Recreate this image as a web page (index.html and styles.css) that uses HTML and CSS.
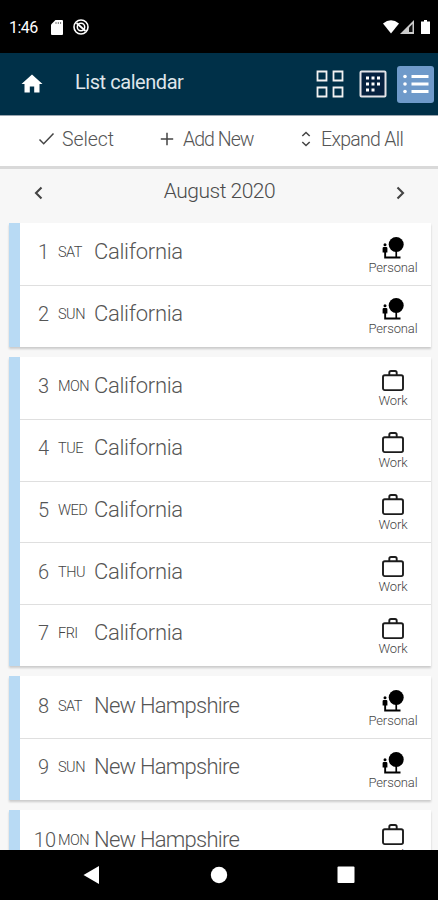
FILE: index.html
```html
<!DOCTYPE html>
<html lang="en">
<head>
<meta charset="utf-8">
<title>List calendar</title>
<link rel="stylesheet" href="styles.css">
</head>
<body>
<svg class="defs" width="0" height="0">
  <symbol id="personal" viewBox="0 0 22 22">
    <circle cx="14.2" cy="8" r="7.5"/>
    <path d="M13.4 14h1.700v6h3.400v1.900H2.200v-6H.6v-4.200q0-1.200 1.200-1.200h2.400q1.200 0 1.200 1.200v4.200h-1.300V20h9.300z"/>
    <circle cx="3" cy="8.200" r="1.500"/>
  </symbol>
  <symbol id="work" viewBox="0 0 22 22">
    <g fill="none" stroke="#1c1c1c" stroke-width="1.900"><rect x="1" y="5.800" width="20" height="14.800" rx="1.800"/><path d="M7.300 6V3.200Q7.300 1.500 9 1.500h4q1.700 0 1.700 1.700V6"/></g>
  </symbol>
</svg>
<div class="screen">
  <div class="status">
    <span class="time">1:46</span>
    <svg class="sd" width="12" height="15" viewBox="0 0 12 15"><path fill="#fff" d="M4.500 0H11q1 0 1 1v13q0 1-1 1H1q-1 0-1-1V4.500z"/><path stroke="#777" d="M5 2v2M7.300 2v2M9.600 2v2"/></svg>
    <svg class="sync" width="16" height="16" viewBox="0 0 16 16" fill="none" stroke="#fff"><circle cx="8" cy="8" r="7" stroke-width="1.600"/><circle cx="8" cy="8" r="3.700" stroke-width="1.500"/><path stroke-width="1.800" d="M3.500 4l9 8"/></svg>
    <svg class="signals" width="48" height="15" viewBox="0 0 48 15"><path fill="#fff" d="M0 3.500Q8 -3 16 3.500L8 13.500z"/><path fill="#ccc" d="M31 0v14H17z"/><path fill="#111" d="M29.500 4v8h-3.500V7.500z"/><path fill="#fff" d="M41 0h3v1.500h3V14h-9V1.500h3z"/></svg>
  </div>
  <header class="header">
    <svg class="home" width="22" height="20" viewBox="0 0 22 20"><path fill="#fff" d="M11 .5 21.500 10h-3v8.500h-5.300v-6H8.800v6H3.500V10h-3z"/></svg>
    <h1 class="title">List calendar</h1>
    <svg class="grid" width="28" height="28" viewBox="0 0 28 28" fill="none" stroke="#f2f2f2" stroke-width="1.800"><path d="M1.500 1.500h9v9h-9zM17.500 1.500h9v9h-9zM1.500 17.500h9v9h-9zM17.500 17.500h9v9h-9z"/></svg>
    <svg class="month" width="28" height="28" viewBox="0 0 28 28"><rect x="1.500" y="1.500" width="25" height="25" rx="1" fill="#06213f" stroke="#e3e3e8" stroke-width="2"/><path fill="#fff" d="M7 6.500h3v3H7zm5.500 0h3v3h-3zm5.500 0h3v3h-3zM7 12.500h3v3H7zm5.500 0h3v3h-3zm5.500 0h3v3h-3zM7 18.500h3v3H7zm5.500 0h3v3h-3z"/></svg>
    <div class="active"><svg width="26" height="20" viewBox="0 0 26 20"><path fill="#fff" d="M8.500 1h17v3h-17zm0 7.500h17v3h-17zm0 7.500h17v3h-17z"/><g fill="#fff"><circle cx="2" cy="2.500" r="1.800"/><circle cx="2" cy="10" r="1.800"/><circle cx="2" cy="17.500" r="1.800"/></g></svg></div>
  </header>
  <nav class="toolbar">
    <span class="tool select"><svg width="17" height="14" viewBox="0 0 17 14"><path d="M1.500 7.500l4.200 4.200L15.500 1.500"/></svg><span>Select</span></span>
    <span class="tool add"><svg width="14" height="14" viewBox="0 0 14 14"><path d="M7 .8v12.400M.8 7h12.400"/></svg><span>Add New</span></span>
    <span class="tool expand"><svg width="10" height="16" viewBox="0 0 10 16"><path d="M1.300 5 5 1.500 8.700 5M1.300 11 5 14.500 8.700 11"/></svg><span>Expand All</span></span>
  </nav>
  <div class="monthbar">
    <svg width="9" height="14" viewBox="0 0 9 14"><path d="M7.500 1.500 2 7l5.500 5.500"/></svg>
    <span class="monthname">August 2020</span>
    <svg width="9" height="14" viewBox="0 0 9 14"><path d="M1.500 1.500 7 7l-5.500 5.500"/></svg>
  </div>
  <main class="list">
    <section class="card">
      <div class="row"><span class="num">1</span><span class="day">SAT</span><span class="place">California</span><span class="tag"><svg><use href="#personal"/></svg><span>Personal</span></span></div>
      <div class="row"><span class="num">2</span><span class="day">SUN</span><span class="place">California</span><span class="tag"><svg><use href="#personal"/></svg><span>Personal</span></span></div>
    </section>
    <section class="card">
      <div class="row"><span class="num">3</span><span class="day">MON</span><span class="place">California</span><span class="tag"><svg><use href="#work"/></svg><span>Work</span></span></div>
      <div class="row"><span class="num">4</span><span class="day">TUE</span><span class="place">California</span><span class="tag"><svg><use href="#work"/></svg><span>Work</span></span></div>
      <div class="row"><span class="num">5</span><span class="day">WED</span><span class="place">California</span><span class="tag"><svg><use href="#work"/></svg><span>Work</span></span></div>
      <div class="row"><span class="num">6</span><span class="day">THU</span><span class="place">California</span><span class="tag"><svg><use href="#work"/></svg><span>Work</span></span></div>
      <div class="row"><span class="num">7</span><span class="day">FRI</span><span class="place">California</span><span class="tag"><svg><use href="#work"/></svg><span>Work</span></span></div>
    </section>
    <section class="card">
      <div class="row"><span class="num">8</span><span class="day">SAT</span><span class="place long">New Hampshire</span><span class="tag"><svg><use href="#personal"/></svg><span>Personal</span></span></div>
      <div class="row"><span class="num">9</span><span class="day">SUN</span><span class="place long">New Hampshire</span><span class="tag"><svg><use href="#personal"/></svg><span>Personal</span></span></div>
    </section>
    <section class="card">
      <div class="row"><span class="num two">10</span><span class="day">MON</span><span class="place long">New Hampshire</span><span class="tag"><svg><use href="#work"/></svg><span>Work</span></span></div>
    </section>
  </main>
  <footer class="navbar">
    <svg width="17" height="20" viewBox="0 0 17 20"><path fill="#fff" d="M16 1v18L.5 10z"/></svg>
    <svg class="circle" width="18" height="18" viewBox="0 0 18 18"><circle fill="#fff" cx="9" cy="9" r="8.200"/></svg>
    <svg class="square" width="18" height="18" viewBox="0 0 18 18"><rect fill="#fff" x=".5" y=".5" width="17" height="16.500" rx="1"/></svg>
  </footer>
</div>
</body>
</html>
```
FILE: styles.css
```css
* { box-sizing: border-box; }
body { margin: 0; font-family: Roboto, "Liberation Sans", sans-serif; font-weight: 300; color: #555; }
.defs { display: none; }
svg { display: block; flex: none; }
.screen { width: 438px; height: 900px; display: flex; flex-direction: column; overflow: hidden; background: #f7f7f7; }
.status { flex: none; height: 53px; background: #000; color: #fff; display: flex; align-items: center; padding: 1px 7px 0 9px; }
.time { width: 42px; font-size: 16px; font-weight: 400; letter-spacing: -0.5px; }
.sync { margin-left: 10px; }
.signals { margin-left: auto; }
.header { flex: none; height: 62px; background: #003048; display: flex; align-items: center; padding: 0 3px 0 21px; }
.title { margin: -4px 0 0 32px; width: 241px; font-size: 20px; line-height: 26px; font-weight: 400; color: #dfe5ea; letter-spacing: -0.45px; white-space: nowrap; }
.month { margin-left: 14.5px; }
.active { width: 37px; height: 37px; margin-left: 10.5px; border-radius: 3px; background: #6f9aca; display: flex; align-items: center; justify-content: center; }
.toolbar { flex: none; height: 54px; background: #fff; border-top: 1px solid #9aa5af; border-bottom: 3px solid #d9d9d9; display: flex; align-items: center; padding: 0 0 4px 38px; font-size: 19.5px; color: #555; }
.tool { display: flex; align-items: center; white-space: nowrap; }
.tool svg, .monthbar svg { fill: none; stroke: #444; stroke-width: 1.5; }
.select { width: 122px; gap: 7px; letter-spacing: -0.1px; }
.add { width: 141px; gap: 9px; letter-spacing: -0.95px; }
.expand { gap: 10px; letter-spacing: -0.7px; }
.monthbar { flex: none; height: 54px; display: flex; justify-content: space-between; align-items: flex-start; padding: 10px 33px 0 34px; color: #4c4c4c; }
.monthbar svg { margin-top: 7px; stroke-width: 2.1; }
.monthname { font-size: 21px; line-height: 24px; letter-spacing: -0.5px; }
.list { flex: 1; min-height: 0; overflow: hidden; display: flex; flex-direction: column; gap: 10.4px; padding-left: 9px; }
.card { flex: none; width: 422px; border-left: 11px solid #b8daf4; background: #fff; box-shadow: 0 2px 2px #cbcbcb; }
.row { height: 61.8px; display: flex; align-items: flex-start; padding-right: 7px; }
.row + .row { box-shadow: inset 0 1px #dfdfdf; }
.num { width: 38px; margin-top: 16.2px; padding-right: 9px; font-size: 20px; line-height: 26px; text-align: right; white-space: nowrap; }
.two { padding-right: 2px; }
.day { width: 36px; margin-top: 16.2px; font-size: 14.5px; line-height: 27px; letter-spacing: -0.5px; color: #444; }
.place { flex: 1; margin-top: 16.2px; font-size: 22px; line-height: 26px; letter-spacing: -0.3px; white-space: nowrap; }
.long { letter-spacing: -0.75px; }
.tag { width: 62px; padding-top: 12.5px; display: flex; flex-direction: column; align-items: center; font-size: 13px; line-height: 18px; color: #444; }
.tag svg { width: 22px; height: 23px; fill: #000; }
.tag span { letter-spacing: -0.1px; }
.navbar { flex: none; height: 50px; background: #000; display: flex; align-items: center; padding-left: 83px; }
.circle { margin-left: 110px; }
.square { margin-left: 109px; }
```
